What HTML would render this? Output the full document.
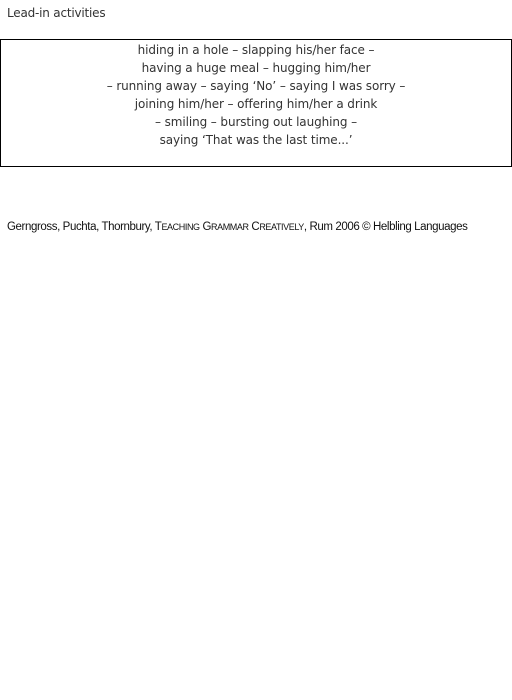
<!DOCTYPE html>
<html><head><style>
body{margin:0;background:#fff;width:512px;height:700px;position:relative;font-family:"DejaVu Sans","Liberation Sans",sans-serif;color:#333}
.t{position:absolute;left:7px;top:6px;font-size:12px;letter-spacing:-0.2px}
.box{position:absolute;left:0;top:39px;width:510px;height:126px;border:1px solid #000}
.l{position:absolute;left:0;width:512px;text-align:center;font-size:12px;letter-spacing:-0.1px;line-height:18px}
.f{position:absolute;left:7px;top:221px;font-family:"Liberation Sans",sans-serif;font-size:11.5px;letter-spacing:-0.4px;white-space:nowrap;color:#111}
.sc{font-size:9px}
</style></head><body>
<div class="t">Lead-in activities</div>
<div class="box"></div>
<div class="l" style="top:41px">hiding in a hole – slapping his/her face –</div>
<div class="l" style="top:59px">having a huge meal – hugging him/her</div>
<div class="l" style="top:77px">– running away – saying ‘No’ – saying I was sorry –</div>
<div class="l" style="top:95px">joining him/her – offering him/her a drink</div>
<div class="l" style="top:113px">– smiling – bursting out laughing –</div>
<div class="l" style="top:131px">saying ‘That was the last time...’</div>
<div class="f">Gerngross, Puchta, Thornbury, T<span class="sc">EACHING</span> G<span class="sc">RAMMAR</span> C<span class="sc">REATIVELY</span>, Rum 2006 © Helbling Languages</div>
</body></html>
